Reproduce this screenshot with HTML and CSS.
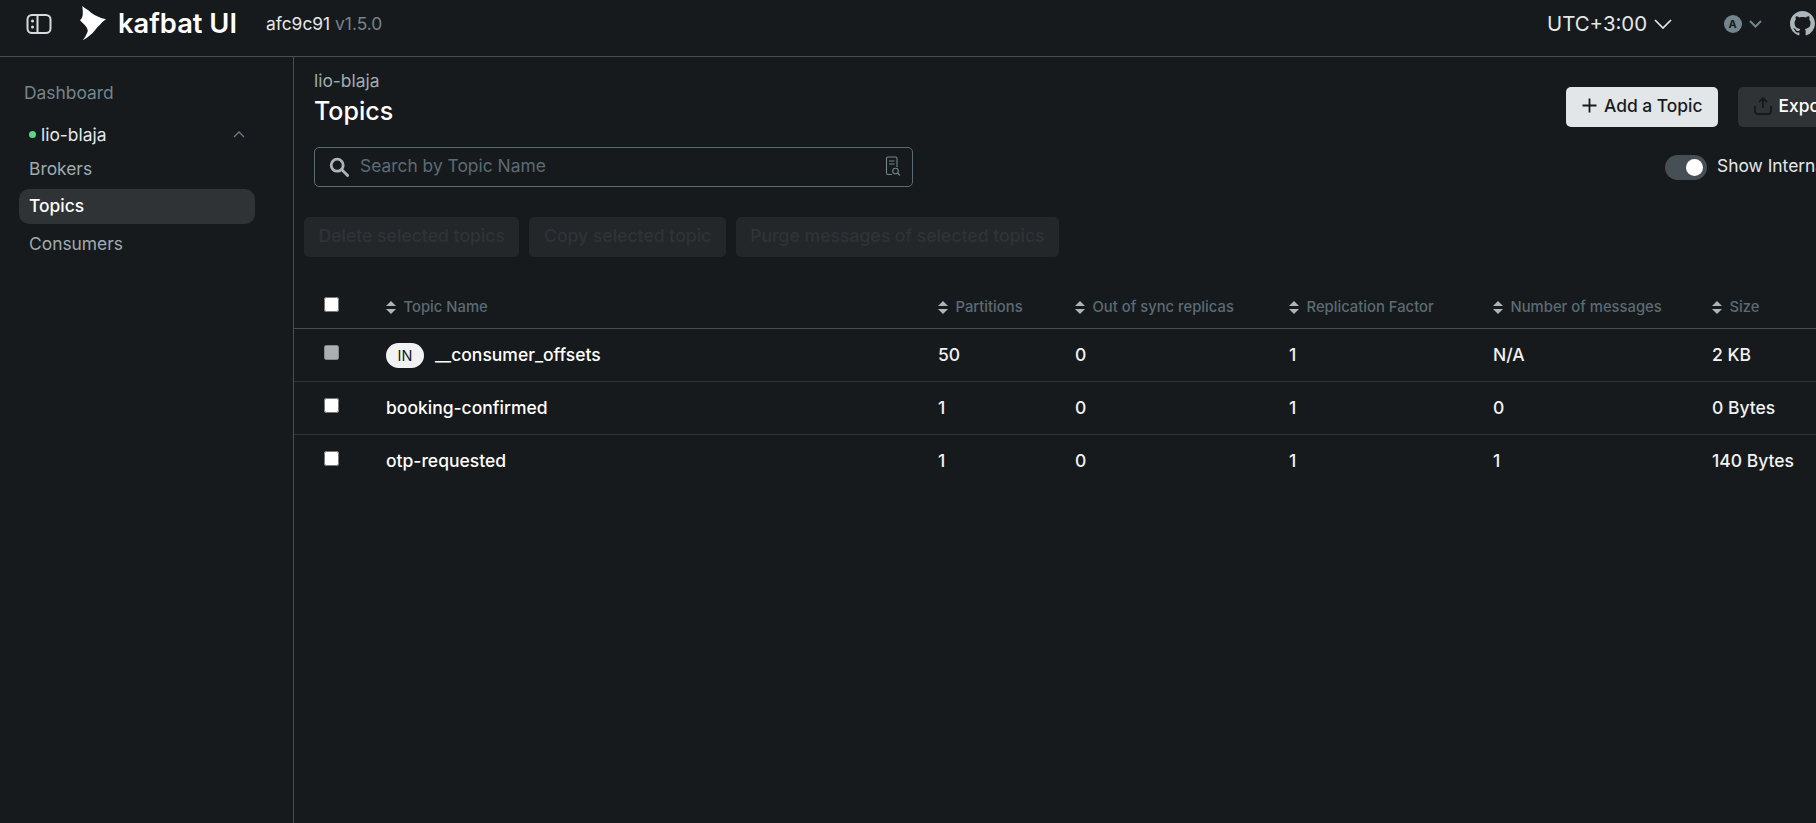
FILE: index.html
```html
<!DOCTYPE html>
<html lang="en">
  <head>
    <meta charset="UTF-8" />
    <meta name="viewport" content="width=device-width, initial-scale=1.0" />
    <title>kafbat UI</title>
    <link rel="stylesheet" href="styles.css">
  </head>
  <body>
    <!-- Top bar -->
    <header class="topbar">
      <div class="topbar-left">
        <svg class="burger" width="26" height="20" viewBox="0 0 26 20" fill="none" stroke="#d5dade" stroke-width="2">
          <rect x="1.5" y="1" width="23" height="18" rx="4.5" />
          <path d="M11.500 1.500v17" />
          <circle cx="6.500" cy="7" r="1.500" fill="#d5dade" stroke="none" />
          <circle cx="6.500" cy="13" r="1.500" fill="#d5dade" stroke="none" />
        </svg>
        <svg class="logo" width="26" height="35" viewBox="0 0 26 35" fill="#fff">
          <path d="M2.300 0 Q5 2.500 8.300 4.300 Q11.500 7.500 15 9.300 Q20 12 26 13.300 Q22.500 15.500 20 18.700 Q17 21 15 24.300 Q13 27 10 29.300 Q6.500 32.500 2.700 34.300 Q5.500 31 6.700 27.700 Q8 25.500 7.700 24.300 Q7 21.500 5 19.300 Q2.500 17 0 14.300 Q2.500 12 2.700 9.300 Q3 4.500 2.300 0 Z" />
        </svg>
        <span class="brand">kafbat UI</span>
        <span class="version">afc9c91 <span class="version-tag">v1.5.0</span></span>
      </div>
      <div class="topbar-right">
        <div class="timezone">
          UTC+3:00
          <svg width="18" height="10" viewBox="0 0 18 10" fill="none" stroke="#e4e8eb" stroke-width="1.7"><path d="M1 1l8 8 8-8" /></svg>
        </div>
        <div class="theme">
          <span class="theme-icon">A</span>
          <svg width="13" height="8" viewBox="0 0 13 8" fill="none" stroke="#73848c" stroke-width="2"><path d="M1 1l5.500 5.500L12 1" /></svg>
        </div>
        <svg class="github" width="25" height="25" viewBox="0 0 16 16" fill="#abb5ba">
          <path d="M8 0C3.58 0 0 3.58 0 8c0 3.54 2.29 6.53 5.47 7.59.4.07.55-.17.55-.38 0-.19-.01-.82-.01-1.49-2.01.37-2.53-.49-2.69-.94-.09-.23-.48-.94-.82-1.13-.28-.15-.68-.52-.01-.53.63-.01 1.08.58 1.23.82.72 1.21 1.87.87 2.33.66.07-.52.28-.87.51-1.07-1.78-.2-3.64-.89-3.64-3.95 0-.87.31-1.59.82-2.15-.08-.2-.36-1.02.08-2.12 0 0 .67-.21 2.2.82.64-.18 1.32-.27 2-.27s1.36.09 2 .27c1.53-1.04 2.2-.82 2.2-.82.44 1.1.16 1.92.08 2.12.51.56.82 1.27.82 2.15 0 3.07-1.87 3.75-3.65 3.95.29.25.54.73.54 1.48 0 1.07-.01 1.93-.01 2.2 0 .21.15.46.55.38A8.01 8.01 0 0 0 16 8c0-4.42-3.58-8-8-8z" />
        </svg>
      </div>
    </header>

    <div class="layout">
      <!-- Menu lateral -->
      <nav class="sidebar">
        <div class="nav-item nav-dashboard">Dashboard</div>
        <div class="cluster">
          <span class="cluster-dot"></span>
          <span class="cluster-name">lio-blaja</span>
          <svg width="12" height="7" viewBox="0 0 12 7" fill="none" stroke="#6f7a82" stroke-width="1.3"><path d="M1 6l5-5 5 5" /></svg>
        </div>
        <div class="nav-item">Brokers</div>
        <div class="nav-item active">Topics</div>
        <div class="nav-item">Consumers</div>
      </nav>

      <!-- Conteúdo principal -->
      <main class="content">
        <div class="page-head">
          <div>
            <div class="crumb">lio-blaja</div>
            <h1 class="page-title">Topics</h1>
          </div>
          <div class="page-actions">
            <button class="btn btn-primary">
              <svg width="15" height="15" viewBox="0 0 15 15" fill="none" stroke="#171a1c" stroke-width="1.8"><path d="M7.500 0.500v14M0.500 7.500h14" /></svg>
              Add a Topic
            </button>
            <button class="btn btn-secondary">
              <svg width="18" height="18" viewBox="0 0 18 18" fill="none" stroke="#171a1c" stroke-width="1.8"><path d="M5 5l4-4 4 4M9 1v10M1 9v5a3 3 0 0 0 3 3h10a3 3 0 0 0 3-3V9" /></svg>
              Export Topics
            </button>
          </div>
        </div>

        <div class="filters">
          <div class="search">
            <svg width="20" height="20" viewBox="0 0 20 20" fill="none" stroke="#abb5ba" stroke-width="2.800"><circle cx="8.200" cy="8.200" r="6" /><path d="M12.600 12.600l6 6" stroke-linecap="round" /></svg>
            <span class="search-text">Search by Topic Name</span>
            <svg class="search-doc" width="16" height="20" viewBox="0 0 16 20" fill="none" stroke="#73848c" stroke-width="1.100"><path d="M7 18.500H3A1.500 1.500 0 0 1 1.500 17V2.500A1.500 1.500 0 0 1 3 1h7.500A1.500 1.500 0 0 1 12 2.500V11M4 5h5.500M4 8h5.500" /><circle cx="10.500" cy="15" r="2.800" /><path d="M12.500 17l2.500 2.500" /></svg>
          </div>
          <div class="internal">
            <span class="switch"><span class="switch-knob"></span></span>
            <span class="internal-label">Show Internal Topics</span>
          </div>
        </div>

        <div class="bulk">
          <button class="btn-bulk">Delete selected topics</button>
          <button class="btn-bulk">Copy selected topic</button>
          <button class="btn-bulk">Purge messages of selected topics</button>
        </div>

        <div class="table">
          <div class="row row-head">
            <div class="cell-check"><input type="checkbox" /></div>
            <div class="th"><i class="sort"></i>Topic Name</div>
            <div class="th"><i class="sort"></i>Partitions</div>
            <div class="th"><i class="sort"></i>Out of sync replicas</div>
            <div class="th"><i class="sort"></i>Replication Factor</div>
            <div class="th"><i class="sort"></i>Number of messages</div>
            <div class="th"><i class="sort"></i>Size</div>
          </div>
          <div class="row">
            <div class="cell-check"><input type="checkbox" disabled /></div>
            <div class="td topic"><span class="pill">IN</span>__consumer_offsets</div>
            <div class="td">50</div>
            <div class="td">0</div>
            <div class="td">1</div>
            <div class="td">N/A</div>
            <div class="td">2 KB</div>
          </div>
          <div class="row">
            <div class="cell-check"><input type="checkbox" /></div>
            <div class="td topic">booking-confirmed</div>
            <div class="td">1</div>
            <div class="td">0</div>
            <div class="td">1</div>
            <div class="td">0</div>
            <div class="td">0 Bytes</div>
          </div>
          <div class="row">
            <div class="cell-check"><input type="checkbox" /></div>
            <div class="td topic">otp-requested</div>
            <div class="td">1</div>
            <div class="td">0</div>
            <div class="td">1</div>
            <div class="td">1</div>
            <div class="td">140 Bytes</div>
          </div>
        </div>
      </main>
    </div>
  </body>
</html>
```

FILE: styles.css
```css
* {
  box-sizing: border-box;
}
html,
body {
  height: 100%;
}
body {
  margin: 0;
  overflow: hidden;
  background-color: #171a1c;
  color: #fff;
  font-family: Inter, "Liberation Sans", sans-serif;
  font-size: 17.4px;
}
/* Top bar */
.topbar {
  display: flex;
  justify-content: space-between;
  align-items: center;
  height: 57px;
  padding-bottom: 9px;
  border-bottom: 1px solid #454f54;
}
.topbar-left {
  display: flex;
  align-items: center;
  padding-left: 26px;
}
.logo {
  margin-left: 28px;
}
.brand {
  margin-left: 12px;
  font-size: 27.3px;
  font-weight: 600;
}
.version {
  margin-left: 29px;
  color: #e4e8eb;
}
.version-tag {
  color: #73848c;
}
.topbar-right {
  display: flex;
  align-items: center;
  flex-shrink: 0;
  width: 269px;
}
.timezone {
  display: flex;
  align-items: center;
  gap: 7px;
  font-size: 20.4px;
  color: #e4e8eb;
}
.theme {
  display: flex;
  align-items: center;
  gap: 7px;
  margin-left: 51.5px;
}
.theme-icon {
  display: flex;
  justify-content: center;
  align-items: center;
  width: 18px;
  height: 18px;
  border-radius: 50%;
  background: #73848c;
  color: #171a1c;
  font-size: 11px;
  font-weight: 700;
}
.github {
  flex-shrink: 0;
  margin-left: 28px;
}
/* Menu lateral */
.layout {
  display: flex;
  height: calc(100% - 57px);
}
.sidebar {
  flex-shrink: 0;
  width: 294px;
  padding: 19px 38px 0 19px;
  border-right: 1px solid #454f54;
}
.nav-item {
  display: flex;
  align-items: center;
  height: 35px;
  margin-bottom: 2.5px;
  padding: 0 0 1.5px 10px;
  border-radius: 10px;
  color: #9fabb1;
}
.nav-dashboard {
  margin-bottom: 5.5px;
  padding-left: 5px;
  color: #73848c;
}
.nav-item.active {
  background: #2f3336;
  color: #fff;
  font-weight: 500;
}
.cluster {
  display: flex;
  align-items: center;
  height: 35px;
  padding-left: 10px;
  color: #e4e8eb;
}
.cluster-dot {
  width: 7px;
  height: 7px;
  margin-right: 5px;
  border-radius: 50%;
  background: #5cd685;
}
.cluster-name {
  flex-grow: 1;
}
.cluster svg {
  margin-right: 10px;
}
/* Conteúdo principal */
.content {
  flex-grow: 1;
  min-width: 0;
  overflow: hidden;
}
.page-head {
  display: flex;
  justify-content: space-between;
  padding: 14px 0 0 20px;
}
.crumb {
  color: #9fabb1;
  line-height: 20px;
}
.page-title {
  margin: 4px 0 0;
  font-size: 25px;
  font-weight: 500;
  line-height: 32px;
}
.page-actions {
  display: flex;
  flex-shrink: 0;
  gap: 20px;
  width: 250px;
  padding-top: 16px;
  overflow: hidden;
}
.btn {
  display: flex;
  flex-shrink: 0;
  align-items: center;
  gap: 7px;
  height: 40px;
  padding: 0 15px 3px 16px;
  border: none;
  border-radius: 5px;
  font-family: inherit;
  font-size: 17.4px;
  font-weight: 500;
}
.btn-primary {
  background: #e3e6e8;
  color: #171a1c;
}
.btn-secondary {
  background: #2f3336;
  color: #fff;
}
.filters {
  display: flex;
  justify-content: space-between;
  align-items: center;
  margin-top: 20px;
  padding-left: 20px;
}
.search {
  display: flex;
  align-items: center;
  width: 599px;
  height: 40px;
  padding: 0 11px 0 14px;
  border: 1px solid #5b6b75;
  border-radius: 5px;
}
.search-text {
  flex-grow: 1;
  margin: 0 0 3px 11px;
  color: #5b6b75;
}
.search-doc {
  margin-bottom: 2px;
}
.internal {
  display: flex;
  flex-shrink: 0;
  align-items: center;
  gap: 10px;
  width: 151px;
  white-space: nowrap;
  overflow: hidden;
  color: #e4e8eb;
}
.internal-label {
  margin-bottom: 3px;
}
.switch {
  display: flex;
  align-items: center;
  flex-shrink: 0;
  justify-content: flex-end;
  width: 42px;
  height: 25px;
  padding-right: 4px;
  border-radius: 13px;
  background: #454f54;
}
.switch-knob {
  width: 17px;
  height: 17px;
  border-radius: 50%;
  background: #fff;
}
.bulk {
  display: flex;
  gap: 10px;
  margin-top: 30px;
  padding-left: 10px;
}
.btn-bulk {
  height: 40px;
  padding: 0 14.5px 3px;
  border: none;
  border-radius: 5px;
  background: #23272a;
  color: #2f3336;
  font-family: inherit;
  font-size: 17.6px;
  font-weight: 500;
}
/* Tabela */
.table {
  margin-top: 26px;
}
.row {
  display: grid;
  grid-template-columns: 92px 552px 137px 214px 204px 219px 1fr;
  height: 53px;
  border-bottom: 1px solid #2f3336;
}
.row-head {
  height: 46px;
  border-bottom-color: #454f54;
}
.row:last-child {
  border-bottom: none;
}
.cell-check {
  padding: 16px 0 0 30px;
}
.row-head .cell-check {
  padding-top: 14px;
}
.cell-check input {
  display: block;
  width: 15px;
  height: 15px;
  margin: 0;
}
.th {
  display: flex;
  align-items: center;
  padding-top: 3px;
  color: #5b6b75;
  font-size: 14.8px;
  font-weight: 500;
  white-space: nowrap;
}
.sort {
  position: relative;
  width: 10px;
  height: 13px;
  margin-right: 7.5px;
}
.sort::before,
.sort::after {
  content: "";
  position: absolute;
  left: 0;
  border-left: 5px solid transparent;
  border-right: 5px solid transparent;
}
.sort::before {
  top: 0;
  border-bottom: 5.5px solid #abb5ba;
}
.sort::after {
  bottom: 0;
  border-top: 5.5px solid #abb5ba;
}
.td {
  display: flex;
  align-items: center;
  padding-bottom: 2px;
  color: #f1f2f3;
  font-size: 17.5px;
  font-weight: 500;
  white-space: nowrap;
}
.topic {
  color: #fff;
}
.pill {
  display: flex;
  justify-content: center;
  align-items: center;
  width: 38px;
  height: 25px;
  margin: 2px 11px 0 0;
  border-radius: 13px;
  background: #f1f2f3;
  color: #171a1c;
  font-size: 14.5px;
  font-weight: 400;
}
```
